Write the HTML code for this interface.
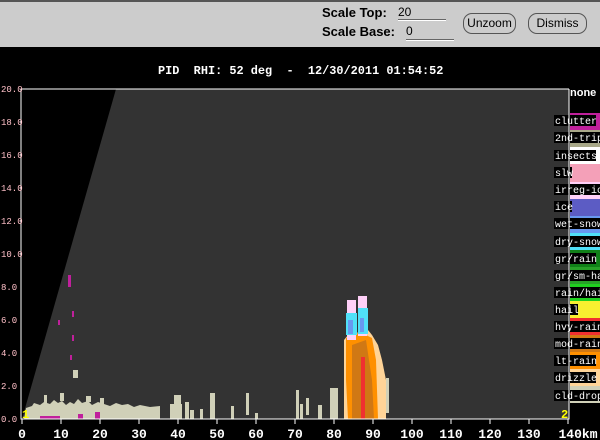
<!DOCTYPE html>
<html><head><meta charset="utf-8"><style>
body{margin:0;width:600px;height:440px;overflow:hidden;background:#000;font-family:"Liberation Mono",monospace}
.top{position:absolute;left:0;top:0;width:600px;height:47px;background:#ccc;border-top:2px solid #555;box-sizing:border-box}
.lbl{position:absolute;font:bold 13px "Liberation Sans",sans-serif;color:#000}
.in{position:absolute;height:1px;border-bottom:1px solid #666;box-shadow:0 1px 0 #fff}
.btn{position:absolute;top:11px;height:19px;border:1px solid #555;border-radius:9px;font:12px "Liberation Sans",sans-serif;line-height:19px;text-align:center;background:#ccc}
</style></head><body>
<div class="top">
<div class="lbl" style="left:322px;top:3px">Scale Top:</div>
<div class="lbl" style="left:322px;top:22px">Scale Base:</div>
<div style="position:absolute;left:398px;top:3px;font:12px 'Liberation Sans';">20</div>
<div class="in" style="left:398px;top:16px;width:48px"></div>
<div style="position:absolute;left:406px;top:22px;font:12px 'Liberation Sans';">0</div>
<div class="in" style="left:406px;top:36px;width:48px"></div>
<div class="btn" style="left:463px;width:51px">Unzoom</div>
<div class="btn" style="left:528px;width:57px">Dismiss</div>
</div>
<svg width="600" height="440" style="position:absolute;left:0;top:0">
<text x="158" y="74" fill="#fff" font-family="Liberation Mono" font-weight="bold" font-size="11.9" xml:space="preserve">PID  RHI: 52 deg  -  12/30/2011 01:54:52</text>
<polygon points="22,419 116,89 569,89 569,419" fill="#333"/>
<g>
<rect x="570" y="113" width="30" height="17" fill="#c0209c"/>
<rect x="570" y="130" width="30" height="17" fill="#a8a888"/>
<rect x="570" y="147" width="30" height="17" fill="#fff"/>
<rect x="570" y="164" width="30" height="18" fill="#f4a0b8"/>
<rect x="570" y="182" width="30" height="17" fill="#ffd0f8"/>
<rect x="570" y="199" width="30" height="17" fill="#5c5cc4"/>
<rect x="570" y="216" width="30" height="17" fill="#6898f0"/>
<rect x="570" y="233" width="30" height="17" fill="#50e0f8"/>
<rect x="570" y="250" width="30" height="17" fill="#108018"/>
<rect x="570" y="267" width="30" height="17" fill="#28a028"/>
<rect x="570" y="284" width="30" height="17" fill="#20d020"/>
<rect x="570" y="301" width="30" height="17" fill="#f8f030"/>
<rect x="570" y="318" width="30" height="17" fill="#f03030"/>
<rect x="570" y="335" width="30" height="17" fill="#d07814"/>
<rect x="570" y="352" width="30" height="17" fill="#ff9000"/>
<rect x="570" y="369" width="30" height="17" fill="#ffd498"/>
<rect x="570" y="386" width="30" height="17" fill="#d0d0b8"/>
</g>
<text x="570" y="96" fill="#fff" font-family="Liberation Sans" font-weight="bold" font-size="11">none</text>
<g font-family="Liberation Mono" font-size="10" fill="#fff">
<g fill="#000">
<rect x="554" y="115" width="42" height="11"/><rect x="554" y="132" width="46" height="11"/><rect x="554" y="150" width="42" height="11"/><rect x="554" y="167" width="18" height="11"/><rect x="554" y="184" width="46" height="11"/><rect x="554" y="201" width="18" height="11"/><rect x="554" y="218" width="46" height="11"/><rect x="554" y="236" width="46" height="11"/><rect x="554" y="253" width="42" height="11"/><rect x="554" y="270" width="46" height="11"/><rect x="554" y="287" width="46" height="11"/><rect x="554" y="304" width="24" height="11"/><rect x="554" y="321" width="46" height="11"/><rect x="554" y="338" width="46" height="11"/><rect x="554" y="355" width="42" height="11"/><rect x="554" y="372" width="42" height="11"/><rect x="554" y="390" width="46" height="11"/>
</g>
<text x="555" y="124">clutter</text><text x="555" y="141">2nd-trip</text><text x="555" y="159">insects</text><text x="555" y="176">slw</text><text x="555" y="193">irreg-ice</text><text x="555" y="210">ice</text><text x="555" y="227">wet-snow</text><text x="555" y="245">dry-snow</text><text x="555" y="262">gr/rain</text><text x="555" y="279">gr/sm-hail</text><text x="555" y="296">rain/hail</text><text x="555" y="313">hail</text><text x="555" y="330">hvy-rain</text><text x="555" y="347">mod-rain</text><text x="555" y="364">lt-rain</text><text x="555" y="381">drizzle</text><text x="555" y="399">cld-drop</text>
</g>
<g fill="#d0d0b8">
<path d="M24,419 L26,408 L32,406 L34,403 L40,405 L44,402 L50,404 L54,400 L58,403 L62,401 L66,405 L70,402 L74,404 L78,399 L82,403 L88,401 L92,405 L98,402 L104,404 L110,406 L116,403 L122,405 L128,404 L134,407 L140,405 L150,407 L160,406 L160,419Z"/>
<rect x="44" y="395" width="3" height="8"/><rect x="60" y="393" width="4" height="8"/><rect x="86" y="396" width="5" height="6"/><rect x="100" y="398" width="4" height="6"/>
<rect x="170" y="404" width="12" height="15"/><rect x="174" y="395" width="7" height="24"/><rect x="185" y="402" width="4" height="17"/><rect x="190" y="410" width="4" height="9"/>
<rect x="200" y="409" width="3" height="10"/><rect x="210" y="393" width="5" height="26"/><rect x="231" y="406" width="3" height="13"/><rect x="246" y="393" width="3" height="22"/><rect x="255" y="413" width="3" height="6"/><rect x="296" y="390" width="3" height="29"/><rect x="300" y="404" width="3" height="15"/><rect x="306" y="398" width="3" height="17"/><rect x="318" y="405" width="4" height="14"/>
<rect x="73" y="370" width="5" height="8"/>
<rect x="330" y="388" width="8" height="31"/><rect x="380" y="386" width="6" height="33"/><rect x="386" y="378" width="3" height="35"/>
</g>
<g fill="#c0209c">
<rect x="68" y="275" width="3" height="12"/><rect x="72" y="311" width="2" height="6"/><rect x="58" y="320" width="2" height="5"/><rect x="72" y="335" width="2" height="6"/><rect x="70" y="355" width="2" height="5"/><rect x="40" y="416" width="20" height="3"/><rect x="78" y="414" width="5" height="5"/><rect x="95" y="412" width="5" height="7"/>
</g>
<rect x="344" y="380" width="4" height="39" fill="#d0d0b8"/>
<polygon points="344,340 348,335 368,330 372,335 378,345 382,360 386,380 386,419 344,419" fill="#ffd498"/>
<polygon points="346,338 360,332 372,338 376,360 378,419 348,419 346,380" fill="#ff9000"/>
<polygon points="352,345 366,340 372,380 374,419 352,419" fill="#d07814"/>
<rect x="361" y="357" width="4" height="62" fill="#f03030"/>
<rect x="347" y="300" width="9" height="40" fill="#ffd0f8"/><rect x="358" y="296" width="9" height="40" fill="#ffd0f8"/>
<rect x="346" y="313" width="11" height="22" fill="#50e0f8"/><rect x="358" y="308" width="10" height="26" fill="#50e0f8"/>
<rect x="348" y="320" width="5" height="14" fill="#6898f0"/><rect x="360" y="318" width="4" height="14" fill="#6898f0"/>
<path d="M21,89 H569 M21,89 V419 H569 V89" stroke="#fff" stroke-width="1" fill="none"/>
<g stroke="#fff">
<path d="M22,419v5M61,419v5M100,419v5M139,419v5M178,419v5M217,419v5M256,419v5M295,419v5M334,419v5M373,419v5M412,419v5M451,419v5M490,419v5M529,419v5M568,419v5"/>
</g>
<g fill="#fff" font-family="Liberation Mono" font-weight="bold" font-size="13" text-anchor="middle">
<text x="22" y="438">0</text><text x="61" y="438">10</text><text x="100" y="438">20</text><text x="139" y="438">30</text><text x="178" y="438">40</text><text x="217" y="438">50</text><text x="256" y="438">60</text><text x="295" y="438">70</text><text x="334" y="438">80</text><text x="373" y="438">90</text><text x="412" y="438">100</text><text x="451" y="438">110</text><text x="490" y="438">120</text><text x="529" y="438">130</text><text x="578" y="438">140km</text>
</g>
<g fill="#ffc0c8" font-family="Liberation Mono" font-size="9">
<text x="1" y="92">20.0</text><text x="1" y="125">18.0</text><text x="1" y="158">16.0</text><text x="1" y="191">14.0</text><text x="1" y="224">12.0</text><text x="1" y="257">10.0</text><text x="1" y="290">8.0</text><text x="1" y="323">6.0</text><text x="1" y="356">4.0</text><text x="1" y="389">2.0</text><text x="1" y="422">0.0</text>
</g>
<text x="22" y="418" fill="#ff0" font-family="Liberation Mono" font-weight="bold" font-size="12">1</text>
<text x="561" y="418" fill="#ff0" font-family="Liberation Mono" font-weight="bold" font-size="12">2</text>
</svg>
</body></html>
